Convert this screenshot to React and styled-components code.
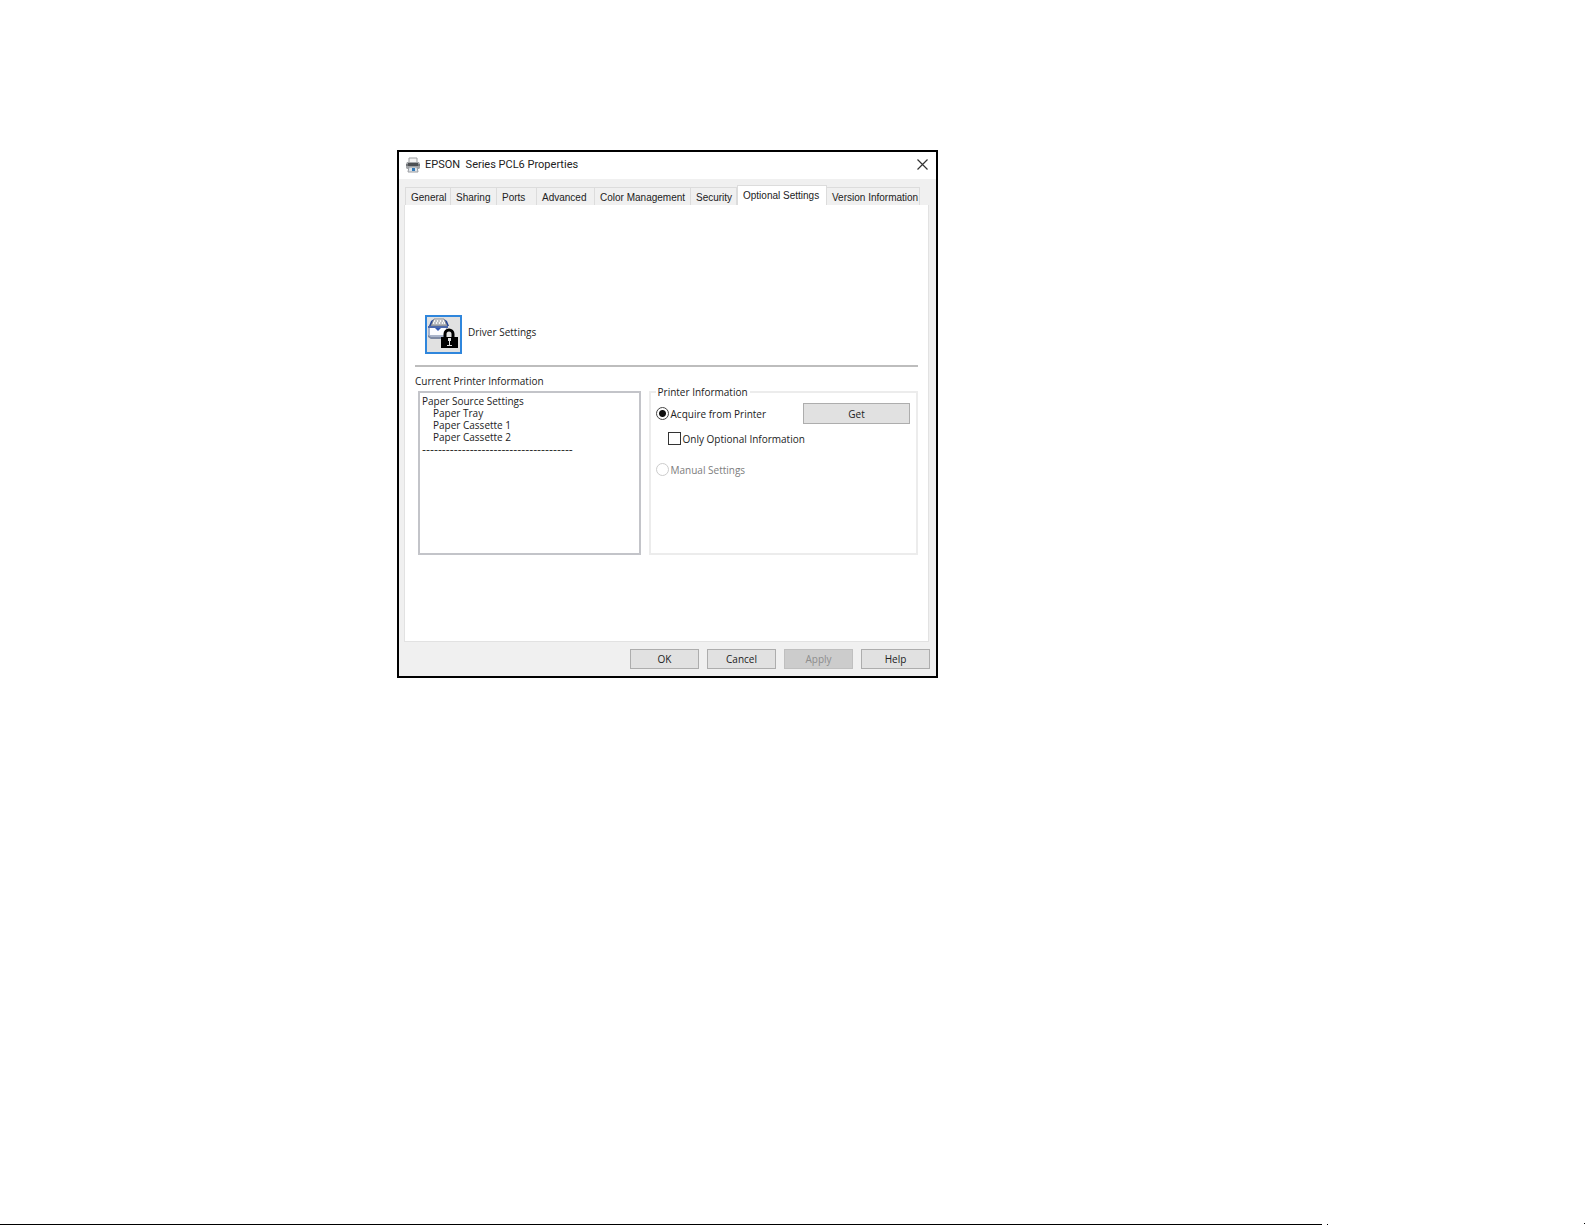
import React, { useState } from 'react';
import styled, { createGlobalStyle } from 'styled-components';

const tabs = [
  { name: 'General', width: 46 },
  { name: 'Sharing', width: 46 },
  { name: 'Ports', width: 40 },
  { name: 'Advanced', width: 58 },
  { name: 'Color Management', width: 96 },
  { name: 'Security', width: 46 },
  { name: 'Optional Settings', width: 90 },
  { name: 'Version Information', width: 93 },
];

const sources = ['Paper Tray', 'Paper Cassette 1', 'Paper Cassette 2'];

const GlobalStyle = createGlobalStyle`
  * {
    box-sizing: border-box;
  }

  body {
    margin: 0;
    background: #fff;
    color: #222;
    font-family: 'Open Sans', sans-serif;
    font-size: 10px;
    line-height: 12px;
  }

  button,
  input {
    margin: 0;
    font: inherit;
    color: inherit;
  }
`;

const Page = styled.main`
  display: flex;
  flex-direction: column;
  min-height: 100vh;
`;

const Content = styled.div`
  flex: 1;
  display: grid;
  grid-template-columns: 397fr minmax(541px, 541fr) 647fr;
  align-items: start;
  padding-top: 150px;
`;

const Dialog = styled.section`
  grid-column: 2;
  border: 2px solid #000;
  background: #f0f0f0;
`;

const TitleBar = styled.header`
  display: flex;
  align-items: center;
  gap: 4px;
  height: 27px;
  padding: 0 8px 2px 6px;
  background: #fff;
`;

const Title = styled.h1`
  flex: 1;
  margin: 0;
  font-family: Roboto, sans-serif;
  font-size: 11px;
  font-weight: 400;
  line-height: 16px;
  white-space: pre;
`;

const CloseButton = styled.button`
  display: flex;
  padding: 0;
  border: 0;
  background: none;
`;

const TabList = styled.div`
  display: flex;
  align-items: flex-end;
  height: 26px;
  padding: 0 16px 0 6px;
`;

const Tab = styled.button`
  flex: 0 1 ${({ $width }) => $width}px;
  height: ${({ $active }) => ($active ? 20 : 18)}px;
  padding: ${({ $active }) => ($active ? 0 : 2)}px 0 0 5px;
  border: 1px solid #dcdcdc;
  border-left-width: ${({ $first, $active }) => ($first || $active ? 1 : 0)}px;
  border-bottom: 0;
  background: ${({ $active }) => ($active ? '#fff' : '#f0f0f0')};
  font-family: 'Liberation Sans', sans-serif;
  text-align: left;
  white-space: nowrap;
`;

const Panel = styled.div`
  margin: 0 7px 0 5px;
  padding: 110px 10px 86px;
  border: 1px solid #e2e2e2;
  border-top: 0;
  background: #fff;
`;

const DriverRow = styled.div`
  display: flex;
  align-items: center;
  gap: 6px;
  padding-left: 10px;

  label {
    padding-bottom: 5px;
  }
`;

const DriverButton = styled.button`
  display: flex;
  padding: 0;
  border: 2px solid #2f86dc;
  background: #e1e1e1;
`;

const Divider = styled.hr`
  height: 2px;
  margin: 11px 0 8px;
  border: 0;
  background: #bdbdbd;
`;

const Columns = styled.div`
  display: grid;
  grid-template-columns: 226fr 270fr;
  gap: 8px;
`;

const Caption = styled.h2`
  margin: 0 0 4px;
  font-size: 10px;
  font-weight: 400;
`;

const SourceList = styled.div`
  height: 164px;
  margin-left: 3px;
  padding: 2px;
  border: 2px solid #c3c4c9;
`;

const Source = styled.div`
  padding-left: ${({ $nested }) => ($nested ? 11 : 0)}px;
`;

const Dashes = styled.div`
  font-family: 'DejaVu Sans', sans-serif;
  font-size: 11px;
  line-height: 14px;
`;

const InfoGroup = styled.fieldset`
  height: 168px;
  min-width: 0;
  margin: 12px 0 0;
  padding: 6px 6px 0 5px;
  border: 2px solid #ececec;
`;

const Legend = styled.legend`
  padding: 0 2px;
  line-height: 10px;
`;

const OptionRow = styled.div`
  display: flex;
  align-items: center;
  justify-content: space-between;
  min-height: 21px;
  padding-left: ${({ $nested }) => ($nested ? 12 : 0)}px;
  margin-bottom: ${({ $gap = 0 }) => $gap}px;
`;

const Option = styled.label`
  display: flex;
  align-items: center;
  gap: 2px;
  color: ${({ $disabled }) => ($disabled ? '#7d7d7d' : 'inherit')};
`;

const Radio = styled.input`
  appearance: none;
  width: 13px;
  height: 13px;
  border: 1px solid #444;
  border-radius: 50%;
  background: #fff;

  &:checked {
    background: radial-gradient(circle, #111 0 3px, #fff 4px);
  }

  &:disabled {
    border-color: #ccc;
  }
`;

const Checkbox = styled.input`
  appearance: none;
  width: 13px;
  height: 13px;
  border: 1px solid #333;
  background: #fff;

  &:checked {
    background: #333;
  }
`;

const PushButton = styled.button`
  width: ${({ $wide }) => ($wide ? 107 : 69)}px;
  height: ${({ $wide }) => ($wide ? 21 : 20)}px;
  padding: 0;
  border: 1px solid #adadad;
  background: #e1e1e1;

  &:disabled {
    border-color: #bfbfbf;
    background: #cccccc;
    color: #8d8d8d;
  }
`;

const Actions = styled.footer`
  display: flex;
  justify-content: flex-end;
  gap: 8px;
  padding: 7px 6px;
`;

const PageEnd = styled.div`
  display: flex;
  align-items: flex-end;
  height: 2px;
`;

const EndRule = styled.div`
  width: 83.4%;
  height: 1px;
  background: #000;
`;

const Dot = styled.div`
  width: 1px;
  height: 1px;
  align-self: ${({ $raised }) => ($raised ? 'flex-start' : 'flex-end')};
  margin-left: ${({ $raised }) => ($raised ? 'auto' : '5px')};
  background: #000;
`;

const PrinterIcon = () => (
  <svg width="16" height="16" viewBox="0 0 16 16" aria-hidden="true">
    <path d="M4 5V1h8v4" fill="#f3f3f3" stroke="#9b9da0" />
    <path d="M2 5h12l1 2v4l-1 1H2l-1-1V7z" fill="#a2a5a8" />
    <path d="M1 7h14v2H1z" fill="#75787c" />
    <path d="M3 6h10v3H3z" fill="#4d5054" />
    <path d="M4 10h8l1 5H3z" fill="#dde4ea" stroke="#9a9ca0" />
    <path d="M7 11h3v3H7z" fill="#3178b8" />
  </svg>
);

const DriverIcon = () => (
  <svg width="33" height="35" viewBox="0 0 33 35" aria-hidden="true">
    <path d="M4 4l3-2-2 7H2zM17 2l3 2 2 5h-3z" fill="#25479a" />
    <path d="M7 2h10l3 7H4z" fill="#f4f4f4" stroke="#85888f" />
    <path d="M8 4h8M7 6h10" stroke="#8c8f96" strokeDasharray="2 1" />
    <path d="M5 8h14" stroke="#6c7078" />
    <path d="M2 9h18v9l-3 4H4l-3-3v-8z" fill="#a9b4cb" />
    <path d="M3 11h16v7H3z" fill="#fbfcff" />
    <path d="M1 9h20v2H1z" fill="#4c68aa" />
    <path d="M8 11h6l-3 3z" fill="#3158b5" />
    <path d="M1 18l3 2h13v2H4l-3-2z" fill="#7d89a3" />
    <path d="M18 20v-3a4 4 0 0 1 8 0v3" fill="#e1e1e1" stroke="#000" strokeWidth="3" />
    <path d="M14 20h17v11H14z" fill="#000" />
    <path d="M21 21h3v3h-1v4h2v1h-5v-1h2v-4h-1z" fill="#e1e1e1" />
  </svg>
);

const App = () => {
  const [activeTab, setActiveTab] = useState('Optional Settings');

  return (
    <Page>
      <GlobalStyle />
      <Content>
        <Dialog>
          <TitleBar>
            <PrinterIcon />
            <Title>{'EPSON  Series PCL6 Properties'}</Title>
            <CloseButton aria-label="Close">
              <svg width="11" height="11" viewBox="0 0 11 11">
                <path d="M0.5 0.5l10 10M10.5 0.5l-10 10" stroke="#333" strokeWidth="1.2" />
              </svg>
            </CloseButton>
          </TitleBar>
          <TabList role="tablist">
            {tabs.map(({ name, width }, index) => (
              <Tab
                key={name}
                role="tab"
                aria-selected={name === activeTab}
                $width={width}
                $first={index === 0}
                $active={name === activeTab}
                onClick={() => setActiveTab(name)}
              >
                {name}
              </Tab>
            ))}
          </TabList>
          <Panel>
            <DriverRow>
              <DriverButton id="driver">
                <DriverIcon />
              </DriverButton>
              <label htmlFor="driver">Driver Settings</label>
            </DriverRow>
            <Divider />
            <Columns>
              <div>
                <Caption>Current Printer Information</Caption>
                <SourceList>
                  <Source>Paper Source Settings</Source>
                  {sources.map((source) => (
                    <Source key={source} $nested>
                      {source}
                    </Source>
                  ))}
                  <Dashes>{'-'.repeat(38)}</Dashes>
                </SourceList>
              </div>
              <InfoGroup>
                <Legend>Printer Information</Legend>
                <OptionRow $gap={4}>
                  <Option>
                    <Radio type="radio" name="mode" defaultChecked />
                    Acquire from Printer
                  </Option>
                  <PushButton $wide>Get</PushButton>
                </OptionRow>
                <OptionRow $nested $gap={10}>
                  <Option>
                    <Checkbox type="checkbox" />
                    Only Optional Information
                  </Option>
                </OptionRow>
                <OptionRow>
                  <Option $disabled>
                    <Radio type="radio" name="mode" disabled />
                    Manual Settings
                  </Option>
                </OptionRow>
              </InfoGroup>
            </Columns>
          </Panel>
          <Actions>
            <PushButton>OK</PushButton>
            <PushButton>Cancel</PushButton>
            <PushButton disabled>Apply</PushButton>
            <PushButton>Help</PushButton>
          </Actions>
        </Dialog>
      </Content>
      <PageEnd>
        <EndRule />
        <Dot />
        <Dot $raised />
      </PageEnd>
    </Page>
  );
};

export default App;
